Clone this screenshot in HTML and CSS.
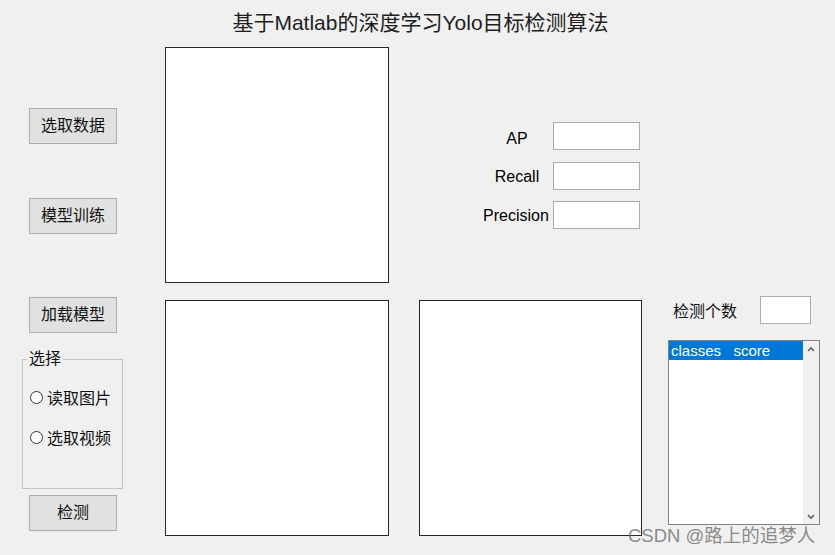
FILE: index.html
```html
<!DOCTYPE html>
<html lang="zh">
<head>
<meta charset="utf-8">
<title>基于Matlab的深度学习Yolo目标检测算法</title>
<link rel="stylesheet" href="styles.css">
</head>
<body>
<div class="app">
  <div class="title">基于Matlab的深度学习Yolo目标检测算法</div>
  <div class="main">
    <div class="side">
      <button class="btn btn-1">选取数据</button>
      <button class="btn btn-2">模型训练</button>
      <button class="btn btn-3">加载模型</button>
      <fieldset class="group">
        <legend class="group-title">选择</legend>
        <label class="radio radio-1"><span class="radio-dot"></span>读取图片</label>
        <label class="radio radio-2"><span class="radio-dot"></span>选取视频</label>
      </fieldset>
      <button class="btn btn-4">检测</button>
    </div>
    <div class="col-axes">
      <div class="axes"></div>
      <div class="axes axes-lower"></div>
    </div>
    <div class="col-metrics">
      <div class="metrics">
        <div class="metric"><span class="metric-label label-ap">AP</span><span class="edit metric-box"></span></div>
        <div class="metric"><span class="metric-label label-recall">Recall</span><span class="edit metric-box"></span></div>
        <div class="metric"><span class="metric-label">Precision</span><span class="edit metric-box"></span></div>
      </div>
      <div class="axes axes-mid"></div>
    </div>
    <div class="col-list">
      <div class="count-row">
        <span class="count-label">检测个数</span>
        <span class="edit count-box"></span>
      </div>
      <div class="listbox">
        <div class="list-items">
          <div class="list-item selected">classes   score</div>
        </div>
        <div class="scrollbar">
          <svg class="chev" width="10" height="8" viewBox="0 0 10 8"><path d="M2 6 L5 3 L8 6" fill="none" stroke="#606060" stroke-width="1.6"/></svg>
          <svg class="chev" width="10" height="8" viewBox="0 0 10 8"><path d="M2 2 L5 5 L8 2" fill="none" stroke="#606060" stroke-width="1.6"/></svg>
        </div>
      </div>
    </div>
  </div>
  <div class="watermark">CSDN @路上的追梦人</div>
</div>
</body>
</html>
```

FILE: styles.css
```css
* { box-sizing: border-box; }
html, body { margin: 0; padding: 0; background: #f0f0f0; }
body {
  font-family: "Liberation Sans", "Noto Sans CJK SC", sans-serif;
  color: #000;
}
.app {
  position: relative;
  width: 835px;
  height: 555px;
  overflow: hidden;
  background: #f0f0f0;
}
.title {
  height: 47px;
  padding-top: 9px;
  padding-left: 6px;
  text-align: center;
  font-size: 21px;
  line-height: 28px;
  color: #1e1e1e;
}
.main {
  display: flex;
  align-items: flex-start;
}
.side {
  width: 101px;
  margin-left: 22px;
  display: flex;
  flex-direction: column;
}
.btn {
  width: 88px;
  height: 36px;
  margin-left: 7px;
  padding: 0;
  background: #e1e1e1;
  border: 1px solid #adadad;
  font-family: "Liberation Sans", "Noto Sans CJK SC", sans-serif;
  font-size: 16px;
  color: #111;
  line-height: 20px;
}
.btn-1 { margin-top: 61px; }
.btn-2 { margin-top: 54px; }
.btn-3 { margin-top: 63px; }
.btn-4 { margin-top: 6px; }
.group {
  margin: 18px 0 0 0;
  padding: 0;
  height: 138px;
  border: 1px solid #c4c4c4;
  display: flex;
  flex-direction: column;
}
.group-title {
  margin-left: 4px;
  padding: 0 2px;
  font-size: 16px;
  line-height: 16px;
  color: #111;
}
.radio {
  display: flex;
  align-items: center;
  height: 20px;
  font-size: 16px;
  margin-left: 7px;
  color: #111;
}
.radio-1 { margin-top: 20px; }
.radio-2 { margin-top: 20px; }
.radio-dot {
  width: 13px;
  height: 13px;
  border-radius: 50%;
  border: 1px solid #333;
  background: #fff;
  margin-right: 4px;
}
.col-axes {
  margin-left: 42px;
  width: 224px;
  display: flex;
  flex-direction: column;
}
.axes {
  width: 224px;
  height: 236px;
  background: #fff;
  border: 1px solid #262626;
}
.axes-lower { margin-top: 17px; }
.col-metrics {
  margin-left: 30px;
  width: 223px;
  display: flex;
  flex-direction: column;
}
.metrics {
  margin-top: 75px;
  display: flex;
  flex-direction: column;
  gap: 11.5px;
}
.metric {
  display: flex;
  align-items: center;
  height: 28px;
  margin-left: 61px;
}
.metric-label {
  width: 70px;
  text-align: center;
  font-size: 16px;
  padding-top: 1px;
  padding-left: 2px;
}
.label-ap { padding-top: 5px; padding-left: 4px; }
.label-recall { padding-top: 3px; padding-left: 4px; }
.edit {
  display: block;
  background: #fff;
  border: 1px solid #ababab;
}
.metric-box {
  margin-left: 3px;
  width: 87px;
  height: 28px;
}
.axes-mid {
  width: 223px;
  margin-top: 70.5px;
}
.col-list {
  margin-left: 26px;
  width: 152px;
  display: flex;
  flex-direction: column;
}
.count-row {
  margin-top: 249px;
  height: 28px;
  display: flex;
  align-items: center;
  justify-content: space-between;
  padding: 0 9px 0 5px;
}
.count-label { font-size: 16px; color: #111; }
.count-box {
  width: 51px;
  height: 28px;
}
.listbox {
  margin-top: 16px;
  height: 185px;
  border: 1px solid #828282;
  background: #fff;
  display: flex;
}
.list-items {
  flex: 1;
}
.list-item {
  height: 19px;
  line-height: 19px;
  font-size: 15px;
  padding-left: 2px;
  white-space: pre;
}
.list-item.selected {
  background: #0078d7;
  color: #fff;
}
.scrollbar {
  width: 16px;
  background: #f0f0f0;
  display: flex;
  flex-direction: column;
  justify-content: space-between;
  align-items: center;
  padding: 4px 0 3px 0;
}
.chev { display: block; }
.watermark {
  position: absolute;
  left: 628px;
  top: 524px;
  font-size: 18.5px;
  line-height: 24px;
  color: rgba(110, 110, 110, 0.8);
  white-space: nowrap;
}
```
